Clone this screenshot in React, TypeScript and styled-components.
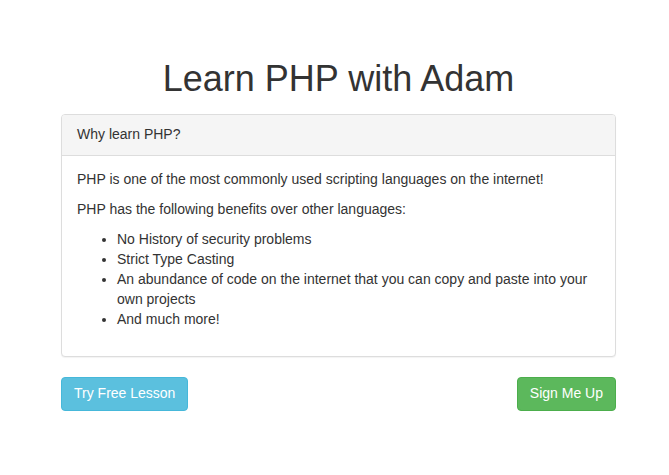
import React from "react";
import styled, { createGlobalStyle } from "styled-components";

const Global = createGlobalStyle`
  html, body { margin: 0; padding: 0; background: #fff; }
  body {
    font-family: "Liberation Sans", Arial, Helvetica, sans-serif;
    font-size: 14px;
    line-height: 1.42857143;
    color: #333;
  }
  * { box-sizing: border-box; }
`;

const Page = styled.div`
  padding: 37px 53px 0 61px;
`;

const Title = styled.h1`
  margin: 22px 0 15px;
  font-size: 36px;
  font-weight: 500;
  line-height: 1.1;
  text-align: center;
  color: #333;
`;

const Panel = styled.div`
  border: 1px solid #ddd;
  border-radius: 4px;
  background: #fff;
  box-shadow: 0 1px 1px rgba(0, 0, 0, 0.05);
  margin-bottom: 20px;
`;

const PanelHeading = styled.div`
  padding: 9px 15px 11px;
  background: #f5f5f5;
  border-bottom: 1px solid #ddd;
  border-radius: 3px 3px 0 0;
  color: #333;
`;

const PanelBody = styled.div`
  padding: 13px 15px 17px;
`;

const Para = styled.p`
  margin: 0 0 10px;
`;

const List = styled.ul`
  margin: 0 0 10px;
  padding-left: 40px;
`;

const Actions = styled.div`
  display: flex;
  justify-content: space-between;
  align-items: center;
`;

const Button = styled.button<{ $variant: "info" | "success" }>`
  display: inline-block;
  padding: 5px 12px 7px;
  font-family: inherit;
  font-size: 14px;
  line-height: 1.42857143;
  border-radius: 4px;
  color: #fff;
  cursor: pointer;
  background: ${(p) => (p.$variant === "info" ? "#5bc0de" : "#5cb85c")};
  border: 1px solid ${(p) => (p.$variant === "info" ? "#46b8da" : "#4cae4c")};
`;

export default function App() {
  return (
    <>
      <Global />
      <Page>
        <Title>Learn PHP with Adam</Title>
        <Panel>
          <PanelHeading>Why learn PHP?</PanelHeading>
          <PanelBody>
            <Para>PHP is one of the most commonly used scripting languages on the internet!</Para>
            <Para>PHP has the following benefits over other languages:</Para>
            <List>
              <li>No History of security problems</li>
              <li>Strict Type Casting</li>
              <li>An abundance of code on the internet that you can copy and paste into your own projects</li>
              <li>And much more!</li>
            </List>
          </PanelBody>
        </Panel>
        <Actions>
          <Button $variant="info">Try Free Lesson</Button>
          <Button $variant="success">Sign Me Up</Button>
        </Actions>
      </Page>
    </>
  );
}
